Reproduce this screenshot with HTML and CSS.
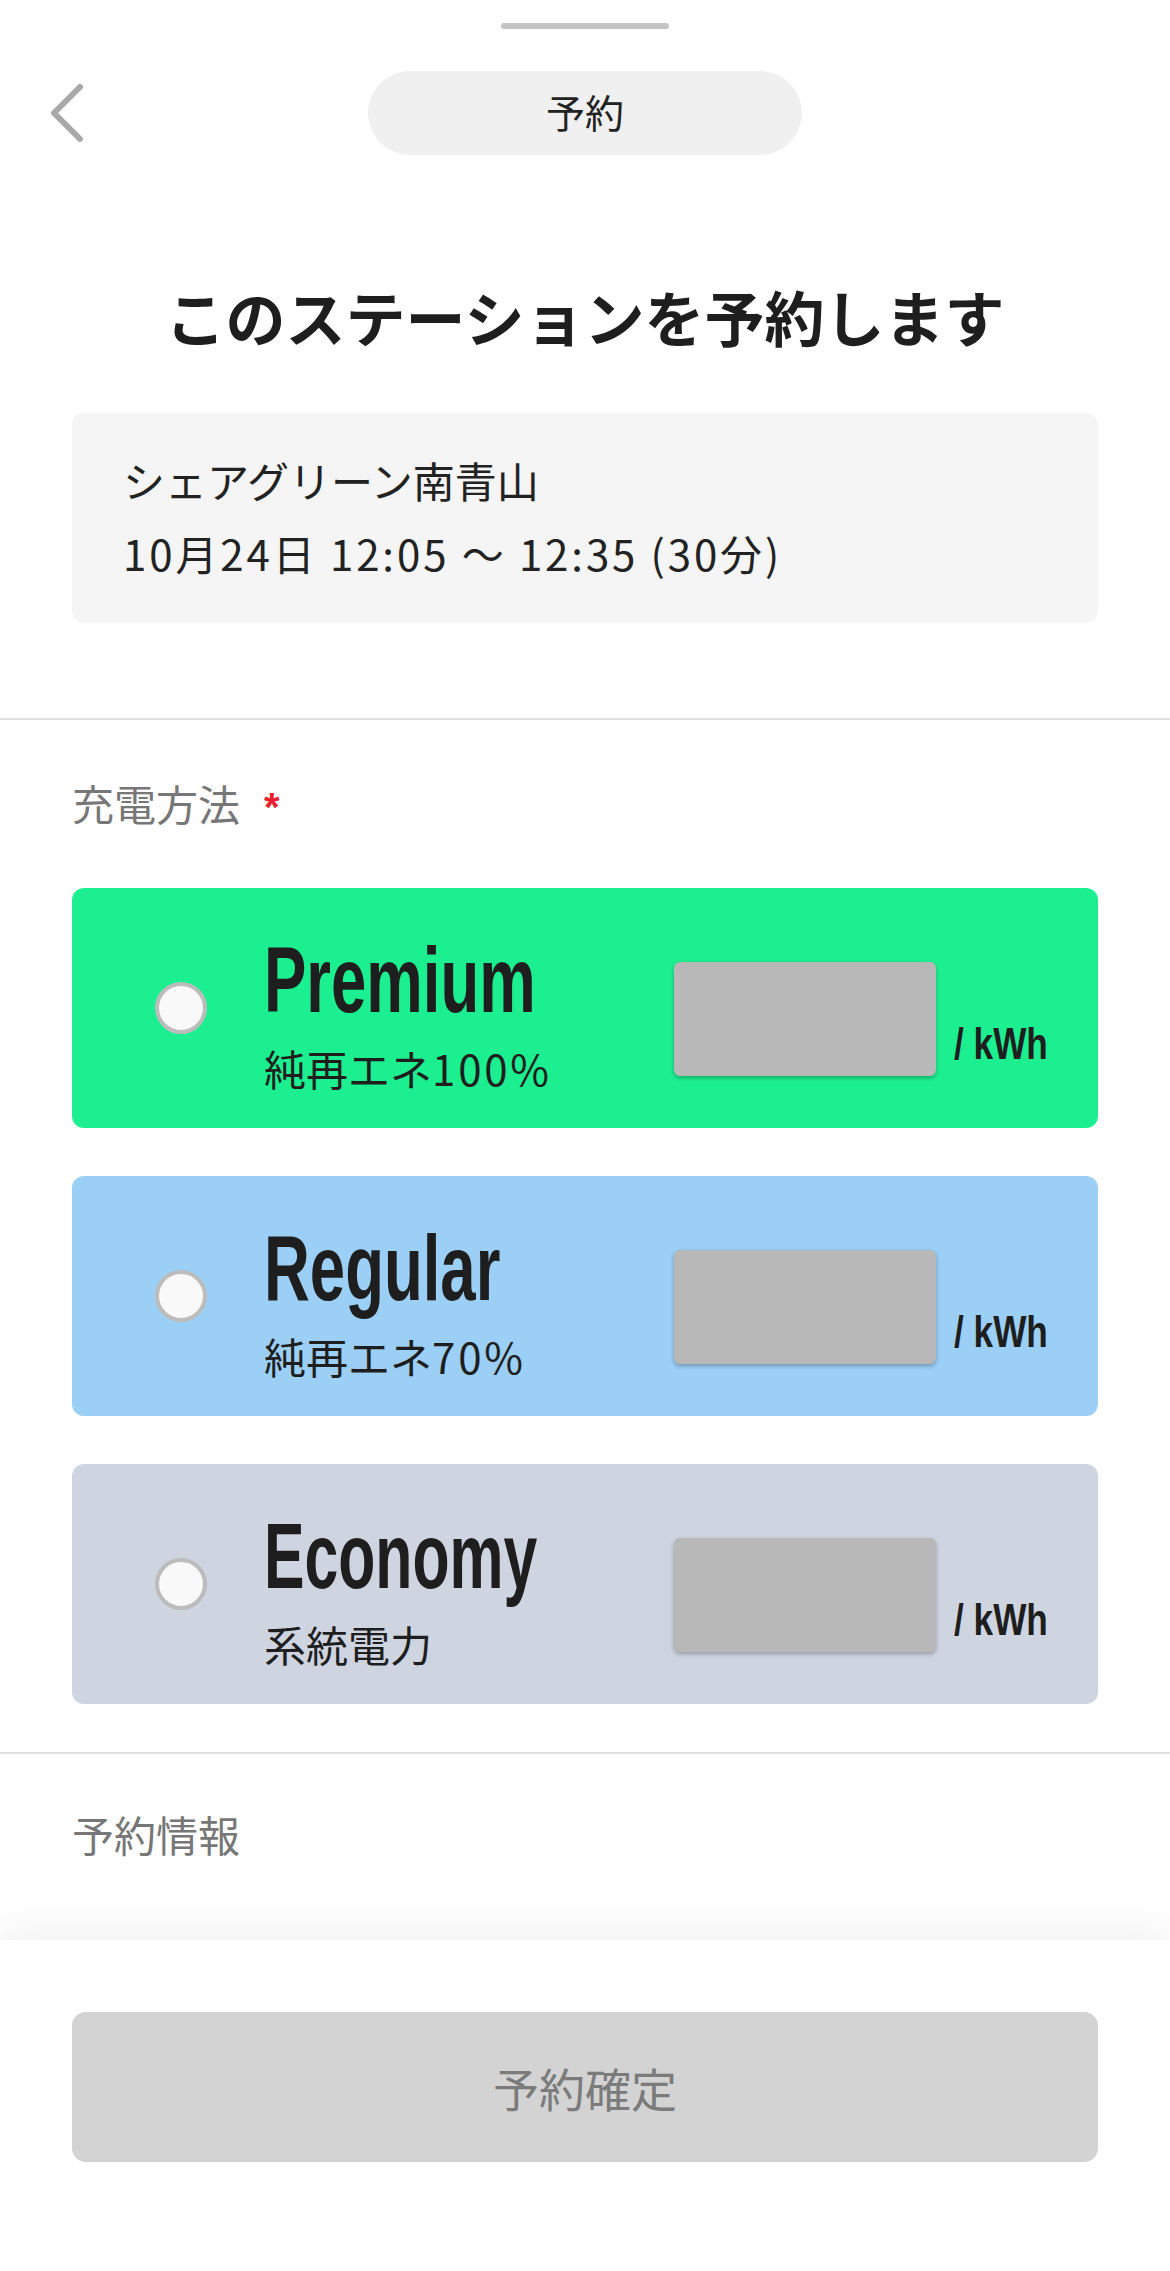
FILE: index.html
```html
<!DOCTYPE html>
<html lang="ja">
<head>
<meta charset="utf-8">
<title>予約</title>
<link rel="stylesheet" href="styles.css">
</head>
<body>
<div class="sheet">
  <div class="handle"></div>
  <header class="topbar">
    <button class="back" aria-label="戻る">
      <svg width="40" height="64" viewBox="0 0 40 64"><path d="M32 6 L6 32 L32 58" fill="none" stroke="#a8a8a8" stroke-width="6" stroke-linecap="round" stroke-linejoin="round"/></svg>
    </button>
    <div class="pill">予約</div>
    <div></div>
  </header>

  <h1 class="title">このステーションを予約します</h1>

  <div class="info">
    <div class="info-line">シェアグリーン南青山</div>
    <div class="info-line date">10月24日 12:05 〜 12:35 (30分)</div>
  </div>

  <div class="divider first"></div>

  <div class="label">充電方法<span class="req">*</span></div>

  <div class="plans">
    <div class="plan plan-premium">
      <span class="radio"></span>
      <div class="plan-text">
        <div class="plan-name"><span>Premium</span></div>
        <div class="plan-sub">純再エネ<span class="num">100%</span></div>
      </div>
      <div class="price">
        <div class="price-box"></div>
        <div class="unit"><span>/ kWh</span></div>
      </div>
    </div>
    <div class="plan plan-regular">
      <span class="radio"></span>
      <div class="plan-text">
        <div class="plan-name"><span>Regular</span></div>
        <div class="plan-sub">純再エネ<span class="num">70%</span></div>
      </div>
      <div class="price">
        <div class="price-box"></div>
        <div class="unit"><span>/ kWh</span></div>
      </div>
    </div>
    <div class="plan plan-economy">
      <span class="radio"></span>
      <div class="plan-text">
        <div class="plan-name"><span>Economy</span></div>
        <div class="plan-sub">系統電力</div>
      </div>
      <div class="price">
        <div class="price-box"></div>
        <div class="unit"><span>/ kWh</span></div>
      </div>
    </div>
  </div>

  <div class="divider second"></div>

  <div class="label label-info">予約情報</div>
</div>

<footer class="footer">
  <button class="confirm">予約確定</button>
</footer>
</body>
</html>
```

FILE: styles.css
```css
* {
  box-sizing: border-box;
}

html, body {
  margin: 0;
  padding: 0;
  background: #ffffff;
}

body {
  width: 1170px;
  font-family: "Noto Sans CJK JP", "Noto Sans", sans-serif;
  color: #222222;
}

.sheet {
  padding-top: 23px;
}

.handle {
  width: 168px;
  height: 6px;
  margin: 0 auto;
  border-radius: 3px;
  background: #c4c4c4;
}

.topbar {
  margin-top: 42px;
  height: 84px;
  display: grid;
  grid-template-columns: 1fr 434px 1fr;
  align-items: center;
}

.back {
  justify-self: start;
  margin-left: 48px;
  padding: 0;
  border: 0;
  background: none;
  width: 40px;
  height: 64px;
  display: flex;
}

.pill {
  height: 84px;
  border-radius: 42px;
  background: #f0f0f0;
  text-align: center;
  font-size: 39px;
  line-height: 80px;
  color: #222222;
}

.title {
  margin: 125px 0 0;
  text-align: center;
  font-size: 60px;
  line-height: 72px;
  font-weight: 700;
  color: #1e1e1e;
}

.info {
  margin: 61px 72px 0;
  padding: 30px 51px 34px;
  background: #f5f5f5;
  border-radius: 12px;
}

.info-line {
  font-size: 42px;
  line-height: 73px;
  color: #222222;
  white-space: nowrap;
}

.info-line.date {
  letter-spacing: 2.9px;
}

.divider {
  height: 2px;
  background: #e0e0e0;
}

.divider.first {
  margin-top: 95px;
}

.divider.second {
  margin-top: 48px;
}

.label {
  margin: 58px 72px 0;
  height: 50px;
  font-size: 42px;
  line-height: 50px;
  color: #777777;
}

.label-info {
  margin-top: 55px;
}

.req {
  margin-left: 24px;
  font-family: "Liberation Sans", Arial, sans-serif;
  font-weight: 700;
  font-size: 40px;
  line-height: 0;
  color: #e8202e;
}

.plans {
  margin: 60px 72px 0;
  display: flex;
  flex-direction: column;
  gap: 48px;
}

.plan {
  height: 240px;
  border-radius: 12px;
  padding: 0 44px 0 83px;
  display: flex;
  align-items: center;
}

.plan-premium {
  background: #1cef90;
}

.plan-regular {
  background: #9bcff5;
}

.plan-economy {
  background: #ced5e1;
}

.radio {
  flex: none;
  width: 52px;
  height: 52px;
  border-radius: 50%;
  border: 4px solid #bcbcbc;
  background: #f9f9f9;
}

.plan-text {
  flex: 1;
  min-width: 0;
  margin-left: 57px;
  margin-top: 12px;
  color: #1e1e1e;
}

.plan-name {
  height: 91px;
  font-family: "Liberation Sans", Arial, sans-serif;
  font-weight: 700;
  font-size: 92px;
  line-height: 91px;
  white-space: nowrap;
}

.plan-name span {
  display: inline-block;
  transform: scaleX(0.69);
  transform-origin: left center;
}

.plan-economy .plan-name span {
  transform: scaleX(0.66);
}

.plan-sub {
  margin-top: 17px;
  font-size: 42px;
  line-height: 50px;
  white-space: nowrap;
}

.plan-sub .num {
  letter-spacing: 2.8px;
}

.price {
  flex: none;
  margin-top: 22px;
  display: flex;
  align-items: flex-end;
}

.price-box {
  width: 262px;
  height: 114px;
  border-radius: 6px;
  background: #b8b8b8;
  box-shadow: 0 2px 4px rgba(0, 0, 0, 0.28);
}

.unit {
  width: 100px;
  margin-left: 18px;
  padding-bottom: 10px;
  font-family: "Liberation Sans", Arial, sans-serif;
  font-weight: 700;
  font-size: 44px;
  line-height: 44px;
  color: #1e1e1e;
  white-space: nowrap;
}

.unit span {
  display: inline-block;
  transform: scaleX(0.8);
  transform-origin: left center;
}

.footer {
  margin-top: 81px;
  height: 331px;
  padding: 72px 72px 0;
  background: #ffffff;
  box-shadow: 0 -10px 40px rgba(0, 0, 0, 0.06);
}

.confirm {
  display: block;
  width: 100%;
  height: 150px;
  border: 0;
  border-radius: 14px;
  background: #d3d3d3;
  font-family: "Noto Sans CJK JP", "Noto Sans", sans-serif;
  font-size: 46px;
  color: #7b7b7b;
}
```
